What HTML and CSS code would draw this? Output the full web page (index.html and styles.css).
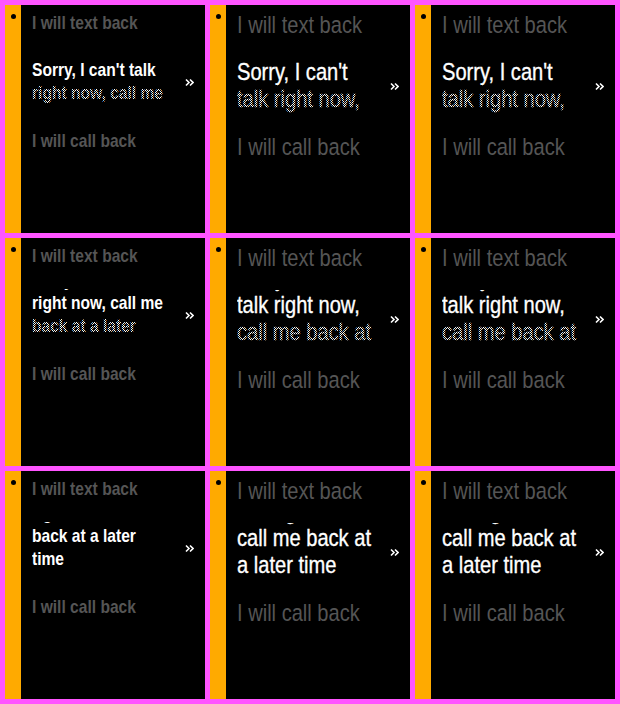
FILE: index.html
```html
<!DOCTYPE html>
<html lang="en">
<head>
<meta charset="utf-8">
<title>Quick replies</title>
<link rel="stylesheet" href="styles.css">
</head>
<body>
<main class="grid">

  <section class="cell sm">
    <div class="bar"><span class="dot"></span></div>
    <div class="content">
      <div class="item"><span class="t">I will text back</span></div>
      <div class="mid">
        <div class="win"><div class="scroll s0">
          <div class="ln"><span class="t">Sorry, I can't talk</span></div>
          <div class="ln dith"><span class="t">right now, call me</span></div>
          <div class="ln"><span class="t">back at a later</span></div>
        </div></div>
        <svg class="chev" viewBox="0 0 9 9"><polyline points="1,1.5 4,4.5 1,7.5"/><polyline points="5,1.5 8,4.5 5,7.5"/></svg>
      </div>
      <div class="item"><span class="t">I will call back</span></div>
    </div>
  </section>

  <section class="cell lg">
    <div class="bar"><span class="dot"></span></div>
    <div class="content">
      <div class="item"><span class="t">I will text back</span></div>
      <div class="mid">
        <div class="win"><div class="scroll s0">
          <div class="ln"><span class="t">Sorry, I can't</span></div>
          <div class="ln dith"><span class="t">talk right now,</span></div>
          <div class="ln"><span class="t">call me back at</span></div>
        </div></div>
        <svg class="chev" viewBox="0 0 9 9"><polyline points="1,1.5 4,4.5 1,7.5"/><polyline points="5,1.5 8,4.5 5,7.5"/></svg>
      </div>
      <div class="item"><span class="t">I will call back</span></div>
    </div>
  </section>

  <section class="cell lg">
    <div class="bar"><span class="dot"></span></div>
    <div class="content">
      <div class="item"><span class="t">I will text back</span></div>
      <div class="mid">
        <div class="win"><div class="scroll s0">
          <div class="ln"><span class="t">Sorry, I can't</span></div>
          <div class="ln dith"><span class="t">talk right now,</span></div>
          <div class="ln"><span class="t">call me back at</span></div>
        </div></div>
        <svg class="chev" viewBox="0 0 9 9"><polyline points="1,1.5 4,4.5 1,7.5"/><polyline points="5,1.5 8,4.5 5,7.5"/></svg>
      </div>
      <div class="item"><span class="t">I will call back</span></div>
    </div>
  </section>

  <section class="cell sm">
    <div class="bar"><span class="dot"></span></div>
    <div class="content">
      <div class="item"><span class="t">I will text back</span></div>
      <div class="mid">
        <div class="win"><div class="scroll s1">
          <div class="ln"><span class="t">Sorry, I can't talk</span></div>
          <div class="ln"><span class="t">right now, call me</span></div>
          <div class="ln dith"><span class="t">back at a later</span></div>
          <div class="ln"><span class="t">time</span></div>
        </div></div>
        <svg class="chev" viewBox="0 0 9 9"><polyline points="1,1.5 4,4.5 1,7.5"/><polyline points="5,1.5 8,4.5 5,7.5"/></svg>
      </div>
      <div class="item"><span class="t">I will call back</span></div>
    </div>
  </section>

  <section class="cell lg">
    <div class="bar"><span class="dot"></span></div>
    <div class="content">
      <div class="item"><span class="t">I will text back</span></div>
      <div class="mid">
        <div class="win"><div class="scroll s1">
          <div class="ln"><span class="t">Sorry, I can't</span></div>
          <div class="ln"><span class="t">talk right now,</span></div>
          <div class="ln dith"><span class="t">call me back at</span></div>
          <div class="ln"><span class="t">a later time</span></div>
        </div></div>
        <svg class="chev" viewBox="0 0 9 9"><polyline points="1,1.5 4,4.5 1,7.5"/><polyline points="5,1.5 8,4.5 5,7.5"/></svg>
      </div>
      <div class="item"><span class="t">I will call back</span></div>
    </div>
  </section>

  <section class="cell lg">
    <div class="bar"><span class="dot"></span></div>
    <div class="content">
      <div class="item"><span class="t">I will text back</span></div>
      <div class="mid">
        <div class="win"><div class="scroll s1">
          <div class="ln"><span class="t">Sorry, I can't</span></div>
          <div class="ln"><span class="t">talk right now,</span></div>
          <div class="ln dith"><span class="t">call me back at</span></div>
          <div class="ln"><span class="t">a later time</span></div>
        </div></div>
        <svg class="chev" viewBox="0 0 9 9"><polyline points="1,1.5 4,4.5 1,7.5"/><polyline points="5,1.5 8,4.5 5,7.5"/></svg>
      </div>
      <div class="item"><span class="t">I will call back</span></div>
    </div>
  </section>

  <section class="cell sm">
    <div class="bar"><span class="dot"></span></div>
    <div class="content">
      <div class="item"><span class="t">I will text back</span></div>
      <div class="mid">
        <div class="win"><div class="scroll s2">
          <div class="ln"><span class="t">Sorry, I can't talk</span></div>
          <div class="ln"><span class="t">right now, call me</span></div>
          <div class="ln"><span class="t">back at a later</span></div>
          <div class="ln"><span class="t">time</span></div>
        </div></div>
        <svg class="chev" viewBox="0 0 9 9"><polyline points="1,1.5 4,4.5 1,7.5"/><polyline points="5,1.5 8,4.5 5,7.5"/></svg>
      </div>
      <div class="item"><span class="t">I will call back</span></div>
    </div>
  </section>

  <section class="cell lg">
    <div class="bar"><span class="dot"></span></div>
    <div class="content">
      <div class="item"><span class="t">I will text back</span></div>
      <div class="mid">
        <div class="win"><div class="scroll s2">
          <div class="ln"><span class="t">Sorry, I can't</span></div>
          <div class="ln"><span class="t">talk right now,</span></div>
          <div class="ln"><span class="t">call me back at</span></div>
          <div class="ln"><span class="t">a later time</span></div>
        </div></div>
        <svg class="chev" viewBox="0 0 9 9"><polyline points="1,1.5 4,4.5 1,7.5"/><polyline points="5,1.5 8,4.5 5,7.5"/></svg>
      </div>
      <div class="item"><span class="t">I will call back</span></div>
    </div>
  </section>

  <section class="cell lg">
    <div class="bar"><span class="dot"></span></div>
    <div class="content">
      <div class="item"><span class="t">I will text back</span></div>
      <div class="mid">
        <div class="win"><div class="scroll s2">
          <div class="ln"><span class="t">Sorry, I can't</span></div>
          <div class="ln"><span class="t">talk right now,</span></div>
          <div class="ln"><span class="t">call me back at</span></div>
          <div class="ln"><span class="t">a later time</span></div>
        </div></div>
        <svg class="chev" viewBox="0 0 9 9"><polyline points="1,1.5 4,4.5 1,7.5"/><polyline points="5,1.5 8,4.5 5,7.5"/></svg>
      </div>
      <div class="item"><span class="t">I will call back</span></div>
    </div>
  </section>

</main>
</body>
</html>
```
FILE: styles.css
```css
* { box-sizing: border-box; margin: 0; padding: 0; }

html, body { background: #ff55ff; }

body {
  width: 620px;
  height: 704px;
  overflow: hidden;
  font-family: "Liberation Sans", Arial, sans-serif;
}

.grid {
  display: grid;
  grid-template-columns: repeat(3, 200px);
  grid-template-rows: repeat(3, 228px);
  gap: 5px;
  padding: 5px;
}

.cell {
  display: flex;
  background: #000;
  overflow: hidden;
}

.bar {
  width: 16px;
  flex: none;
  background: #ffaa00;
  padding: 9px 0 0 6px;
}

.dot {
  display: block;
  width: 5px;
  height: 5px;
  border-radius: 50%;
  background: #000;
}

.content {
  flex: 1;
  min-width: 0;
  padding: 6px 11px 0 11px;
  display: flex;
  flex-direction: column;
}

/* condensed glyphs (watch font is narrow) */
.t {
  display: inline-block;
  white-space: nowrap;
  transform: scaleX(0.82);
  transform-origin: 0 0;
}

.item {
  color: #555555;
  white-space: nowrap;
}

.mid {
  display: flex;
  align-items: flex-start;
}

.win {
  flex: 1;
  min-width: 0;
  overflow: hidden;
}

.ln {
  position: relative;
  color: #ffffff;
  white-space: nowrap;
}

/* 50% ordered dither over the line that is scrolling in */
.dith::after {
  content: "";
  position: absolute;
  inset: 0;
  background: repeating-conic-gradient(#000000 0 25%, transparent 0 50%) 0 0 / 2px 2px;
}

.chev {
  flex: none;
  width: 9px;
  height: 9px;
  fill: none;
  stroke: #ffffff;
  stroke-width: 1.6;
}

/* small (bold 18-style) variant */
.sm { font-size: 19px; line-height: 23px; font-weight: bold; }
.sm .mid { margin-top: 22px; }
.sm .win { height: 49px; padding-top: 2px; }
.sm .chev { margin-top: 22px; }
.sm .mid + .item { margin-top: 24px; }
.sm .s1 { margin-top: -23px; }
.sm .s2 { margin-top: -46px; }

/* large (24-style) variant */
.lg { font-size: 24.5px; line-height: 27px; font-weight: normal; }
.lg .ln { -webkit-text-stroke: 0.35px #ffffff; }
.lg .mid { margin-top: 19px; }
.lg .win { height: 57px; padding-top: 1px; }
.lg .chev { margin-top: 25px; }
.lg .mid + .item { margin-top: 19px; }
.lg .s1 { margin-top: -27px; }
.lg .s2 { margin-top: -54px; }
```
